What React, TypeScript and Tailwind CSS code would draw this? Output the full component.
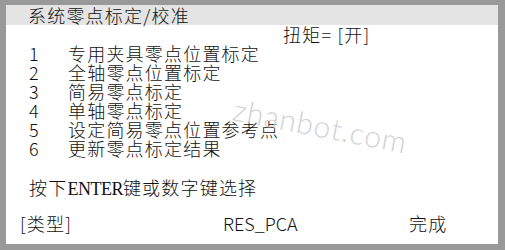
import React from "react";

const items = [
  "专用夹具零点位置标定",
  "全轴零点位置标定",
  "简易零点标定",
  "单轴零点标定",
  "设定简易零点位置参考点",
  "更新零点标定结果",
];

export default function App() {
  return (
    <div
      className="w-[505px] h-[250px] bg-[#999999] pt-[5px] pl-[6px] pr-[7px] pb-[6px] overflow-hidden"
      style={{ fontFamily: '"Noto Sans CJK SC", "Noto Sans", sans-serif' }}
    >
      <div className="relative w-full h-full bg-white flex flex-col text-[18px] font-light text-[#111] tracking-[1.2px] overflow-hidden">
        <div className="h-[20px] bg-[#e4e4e4] pl-[22px] leading-[20px]">系统零点标定/校准</div>
        <div className="h-[19px] leading-[19px] pl-[277px]">扭矩= [开]</div>
        <div className="flex flex-col pl-[23px]">
          {items.map((t, i) => (
            <div key={i} className="flex h-[19px] leading-[19px]">
              <span className="w-[39px] tracking-normal">{i + 1}</span>
              <span>{t}</span>
            </div>
          ))}
        </div>
        <div className="mt-[20px] h-[19px] leading-[19px] pl-[23px]">
          按下<span className="tracking-[-0.5px]" style={{ fontFamily: '"Liberation Serif", serif' }}>ENTER</span>键或数字键选择
        </div>
        <div className="mt-[17px] h-[19px] leading-[19px] flex">
          <span className="w-[217px] pl-[14px]">[类型]</span>
          <span className="w-[186px] tracking-normal">RES_PCA</span>
          <span>完成</span>
        </div>
        <div
          className="absolute left-[226px] top-[98px] text-[30px] text-[#d2d2d2] tracking-[1px] rotate-[11deg] pointer-events-none font-light"
          style={{ fontFamily: 'Lato, "Liberation Sans", sans-serif' }}
        >
          zhanbot.com
        </div>
      </div>
    </div>
  );
}
